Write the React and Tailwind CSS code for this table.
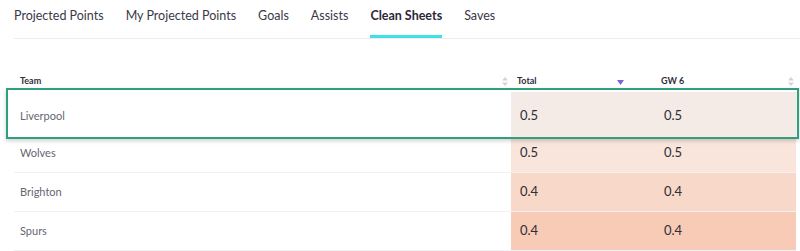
import React from "react";

const tabs = ["Projected Points", "My Projected Points", "Goals", "Assists", "Clean Sheets", "Saves"];

const rows = [
  { team: "Liverpool", total: "0.5", gw: "0.5", bg: "bg-[#f5ebe6]", active: true },
  { team: "Wolves", total: "0.5", gw: "0.5", bg: "bg-[#f9e5dc]" },
  { team: "Brighton", total: "0.4", gw: "0.4", bg: "bg-[#f8d8c8]" },
  { team: "Spurs", total: "0.4", gw: "0.4", bg: "bg-[#f7cbb5]" },
];

function SortIcon() {
  return (
    <svg width="6" height="9" viewBox="0 0 6 9" className="shrink-0">
      <path d="M3 0 L6 3.5 H0 Z" fill="#d4d4d8" />
      <path d="M3 9 L6 5.5 H0 Z" fill="#d4d4d8" />
    </svg>
  );
}

export default function App() {
  return (
    <div className="w-[800px] h-[251px] overflow-hidden bg-white" style={{ fontFamily: "Lato, 'Open Sans', sans-serif" }}>
      {/* Tabs */}
      <div className="ml-[14px] flex gap-[22px] border-b border-[#ececef]">
        {tabs.map((t) => (
          <div
            key={t}
            className={
              t === "Clean Sheets"
                ? "pt-[7px] pb-[10px] text-[12.5px] leading-[18px] font-bold text-[#2a2838] border-b-[3px] border-[#3fe1e6]"
                : "pt-[7px] pb-[10px] text-[12.5px] leading-[18px] text-[#3a3848] border-b-[3px] border-transparent"
            }
          >
            {t}
          </div>
        ))}
      </div>

      {/* Table */}
      <div className="ml-[14px] w-[782px] mt-[33px]">
        <div className="flex h-[24px] items-start pt-[3px] text-[9px] leading-[12px] font-bold text-[#2e2e3a]">
          <div className="w-[497px] flex justify-between items-center pl-[6px] pr-[3px]">
            <span>Team</span>
            <SortIcon />
          </div>
          <div className="w-[144px] flex justify-between items-center pl-[6px] pr-[31px]">
            <span>Total</span>
            <svg width="7" height="5" viewBox="0 0 7 5" className="mt-[3px]">
              <path d="M0 0 H7 L3.5 5 Z" fill="#7468d8" />
            </svg>
          </div>
          <div className="flex-1 flex justify-between items-center pl-[6px] pr-[2px]">
            <span>GW 6</span>
            <SortIcon />
          </div>
        </div>

        {rows.map((r) =>
          r.active ? (
            <div
              key={r.team}
              className="relative z-10 -mt-[8px] -mb-[5px] -ml-[8px] -mr-[3px] h-[51px] flex border-2 border-[#2f9f80] bg-white shadow-[0_2px_4px_rgba(0,0,0,0.18)]"
            >
              <div className="w-[503px] flex items-center pl-[12px] pt-[5px] text-[11px] text-[#666670]">{r.team}</div>
              <div className={`flex-1 flex mt-[2px] pt-[3px] ${r.bg}`}>
                <div className="w-[144px] flex items-center pl-[9px] text-[13px] text-[#2e2e36]">{r.total}</div>
                <div className="flex-1 flex items-center pl-[9px] text-[13px] text-[#2e2e36]">{r.gw}</div>
              </div>
            </div>
          ) : (
            <div key={r.team} className="h-[39px] flex border-b border-[#f1f1f3]">
              <div className="w-[497px] flex items-center pl-[6px] text-[11px] text-[#666670]">{r.team}</div>
              <div className={`flex-1 flex ${r.bg}`}>
                <div className="w-[144px] flex items-center pl-[9px] text-[13px] text-[#2e2e36]">{r.total}</div>
                <div className="flex-1 flex items-center pl-[9px] text-[13px] text-[#2e2e36]">{r.gw}</div>
              </div>
            </div>
          )
        )}
      </div>
    </div>
  );
}
